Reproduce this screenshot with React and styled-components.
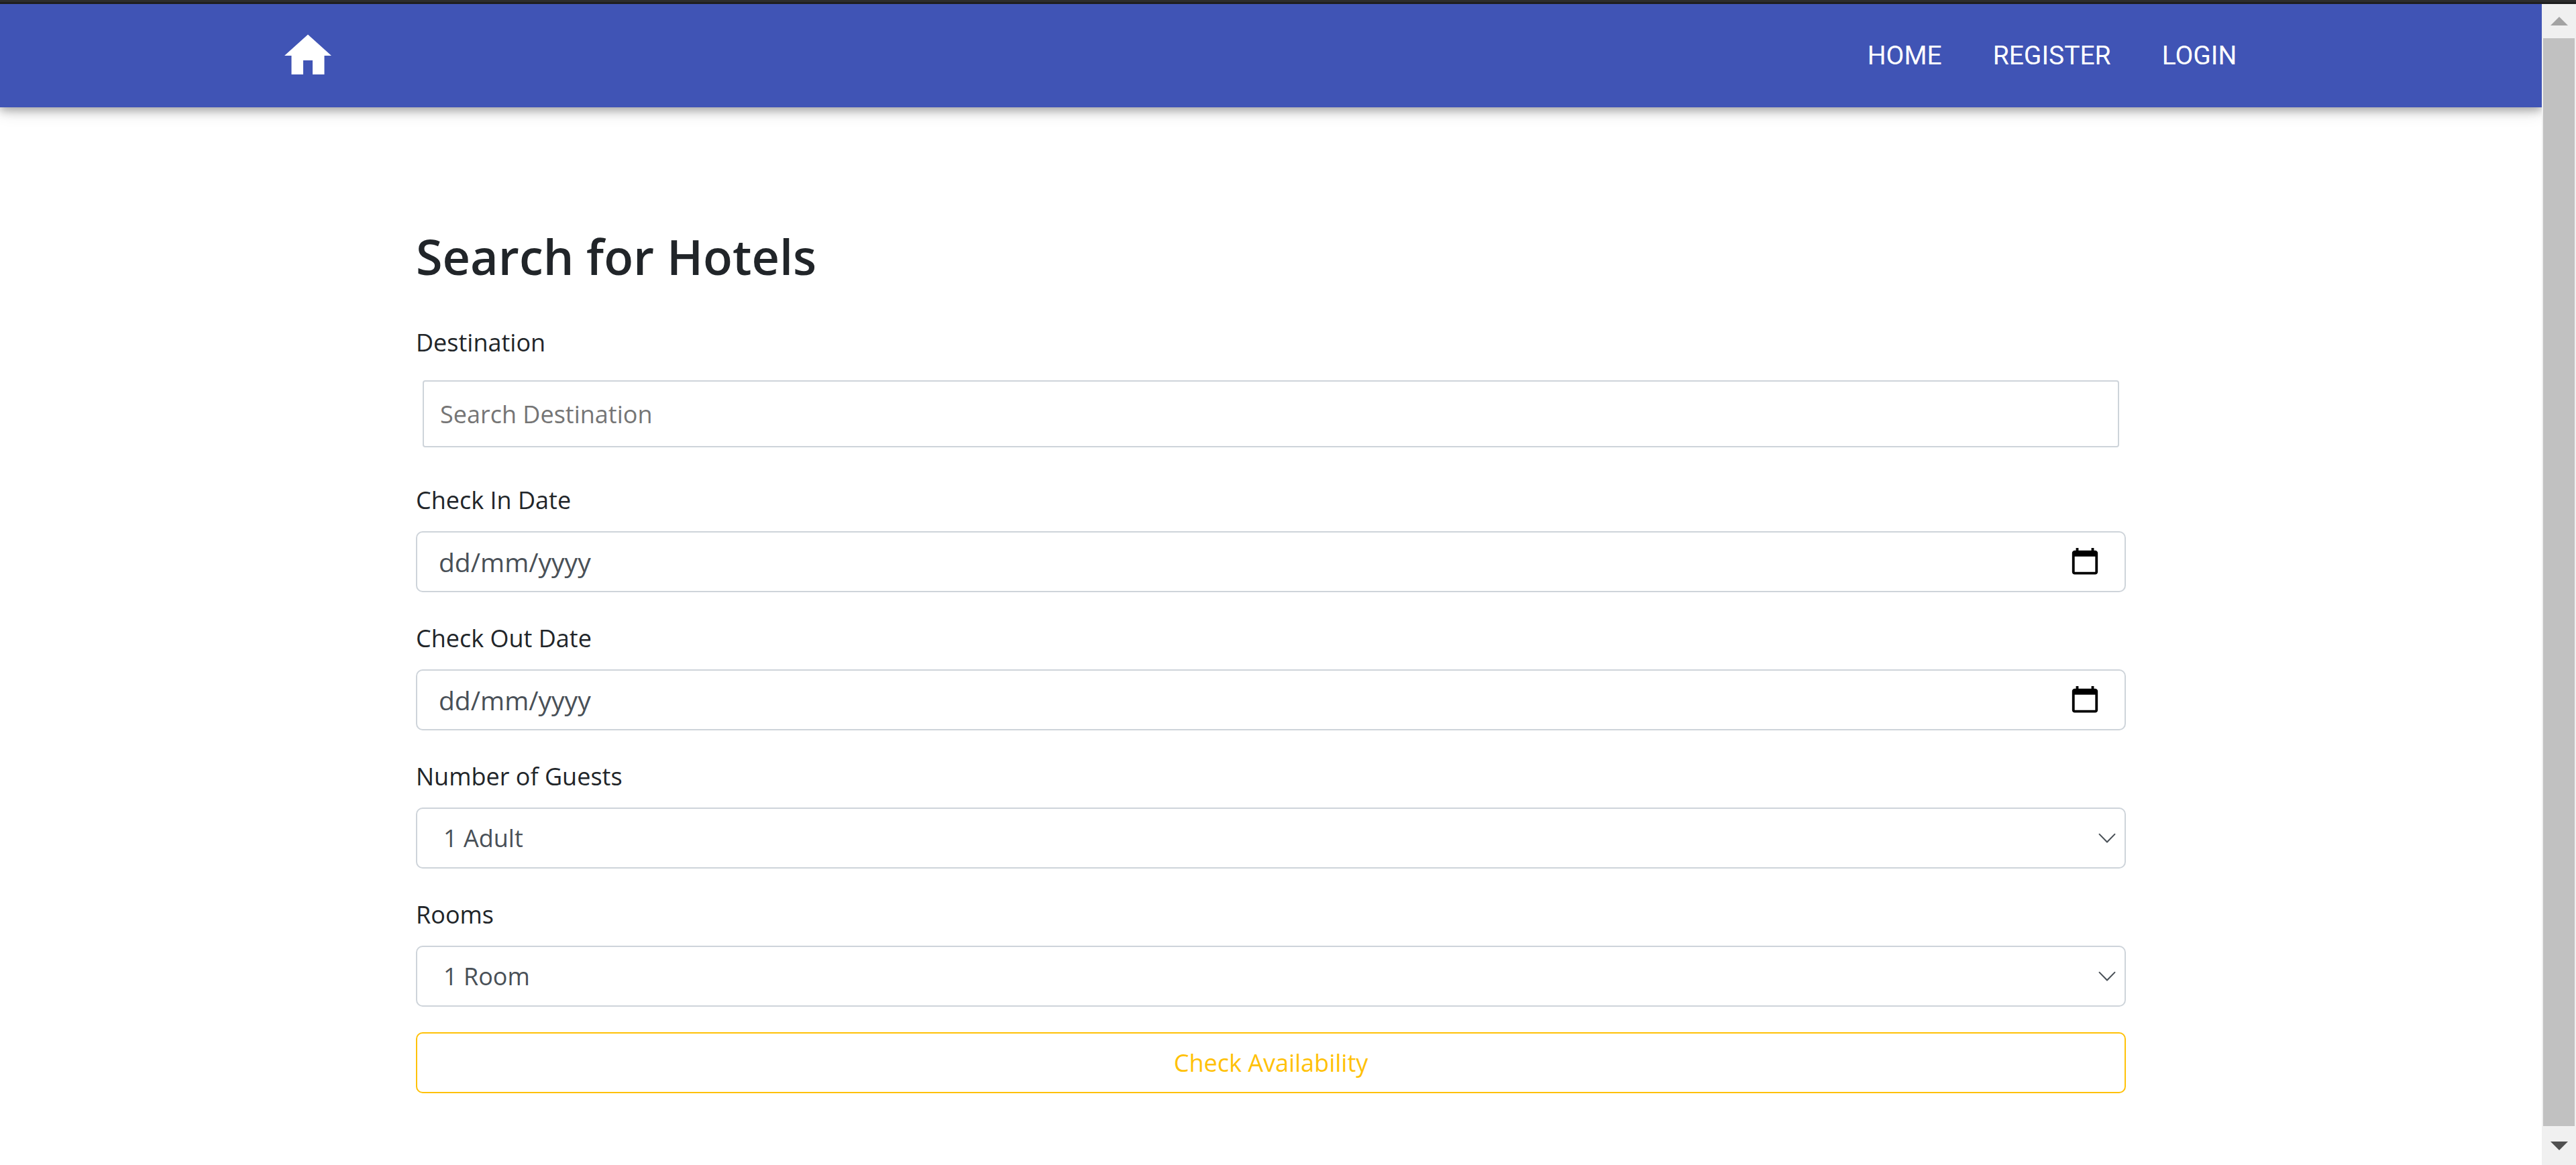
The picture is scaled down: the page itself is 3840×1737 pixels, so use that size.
import React from "react";
import styled, { createGlobalStyle } from "styled-components";

const GlobalStyle = createGlobalStyle`
  *, *::before, *::after { box-sizing: border-box; }
  body {
    margin: 0;
    background: #fff;
    color: #212529;
    font-family: "Segoe UI", "Open Sans", "Noto Sans", sans-serif;
    font-size: 36px;
    line-height: 62px;
  }
  input, select, button { font: inherit; }
`;

const Screen = styled.div`
  display: flex;
  flex-direction: column;
  height: 100vh;
`;

const WindowEdge = styled.div`
  flex: none;
  height: 6px;
  background: #1f1f1f;
  border-top: 3px solid #2d2d2d;
`;

const Viewport = styled.div`
  flex: 1;
  min-height: 0;
  display: flex;
`;

const Page = styled.div`
  flex: 1;
  min-width: 0;
  overflow: hidden;
`;

const NavBar = styled.header`
  display: flex;
  align-items: center;
  justify-content: space-between;
  height: 154px;
  padding: 0 11%;
  background: #4054b5;
  box-shadow: 0 5px 12px rgba(0, 0, 0, 0.26), 0 5px 24px rgba(0, 0, 0, 0.16);
`;

const Brand = styled.a`
  display: flex;
  color: #fff;

  svg {
    width: 84px;
    height: 84px;
    fill: currentColor;
  }
`;

const NavLinks = styled.nav`
  display: flex;
`;

const NavLink = styled.a`
  padding: 0 38px;
  color: #fff;
  font-family: Roboto, sans-serif;
  font-size: 39px;
  text-decoration: none;
`;

const Content = styled.main`
  width: 100%;
  max-width: 2549px;
  margin: 0 auto;
  padding-top: 168px;
`;

const Title = styled.h1`
  margin: 0 0 44px;
  font-size: 72px;
  font-weight: 600;
  line-height: 108px;
`;

const Form = styled.form`
  display: flex;
  flex-direction: column;
`;

const Field = styled.div`
  display: flex;
  flex-direction: column;
  margin-bottom: 38px;
`;

const Label = styled.label`
  margin-bottom: 15px;
`;

const Control = styled.div`
  display: flex;
  align-items: center;
  height: ${(p) => (p.$inset ? "100px" : "91px")};
  margin: ${(p) => (p.$inset ? "10px" : "0")};
  padding-right: ${(p) => (p.$inset ? "24px" : "36px")};
  border: 2px solid #ced4da;
  border-radius: ${(p) => (p.$inset ? "4px" : "10px")};
`;

const TextInput = styled.input`
  flex: 1;
  min-width: 0;
  height: 100%;
  padding: 0 0 0 24px;
  border: 0;
  outline: 0;
  background: none;
  color: #495057;

  &::placeholder {
    color: #757575;
    opacity: 1;
  }
`;

const DateInput = styled(TextInput)`
  padding-left: 32px;
  font-size: 39px;

  &::placeholder {
    color: #495057;
  }
`;

const PickerButton = styled.button`
  display: flex;
  padding: 0;
  border: 0;
  background: none;

  svg {
    width: 46px;
    height: 46px;
  }
`;

const SelectBox = styled.div`
  display: grid;
  align-items: center;
  height: 91px;

  > * { grid-area: 1 / 1; }

  svg {
    justify-self: end;
    width: 28px;
    height: 28px;
    margin-right: 14px;
    pointer-events: none;
  }
`;

const Select = styled.select`
  appearance: none;
  width: 100%;
  height: 100%;
  padding: 0 60px 0 39px;
  border: 2px solid #ced4da;
  border-radius: 10px;
  background: #fff;
  color: #495057;
`;

const SubmitButton = styled.button`
  height: 91px;
  padding: 0 24px;
  border: 2px solid #ffc107;
  border-radius: 10px;
  background: #fff;
  color: #ffc107;
`;

const ScrollBar = styled.div`
  flex: none;
  display: flex;
  flex-direction: column;
  width: 51px;
  padding: 0 2px;
  background: #f0f0f0;
`;

const ScrollArrow = styled.div`
  display: flex;
  align-items: center;
  justify-content: center;
  height: ${(p) => (p.$down ? "58px" : "51px")};

  &::before {
    content: "";
    border: 13px solid transparent;
    border-width: ${(p) => (p.$down ? "13px 13px 0" : "0 13px 13px")};
    border-top-color: ${(p) => (p.$down ? "#505050" : "transparent")};
    border-bottom-color: ${(p) => (p.$down ? "transparent" : "#a3a3a3")};
  }
`;

const ScrollThumb = styled.div`
  flex: 1;
  background: #c1c1c1;
`;

function DateField({ id, label }) {
  return (
    <Field>
      <Label htmlFor={id}>{label}</Label>
      <Control>
        <DateInput id={id} type="text" inputMode="numeric" placeholder="dd/mm/yyyy" />
        <PickerButton type="button" aria-label={`Choose ${label}`}>
          <svg viewBox="0 0 24 24">
            <path d="M20 3h-1V1h-2v2H7V1H5v2H4c-1.100 0-2 .9-2 2v14.700c0 1.100.9 2 2 2h16c1.100 0 2-.9 2-2V5c0-1.100-.9-2-2-2zm0 16.700H4V7.700h16v12z" />
          </svg>
        </PickerButton>
      </Control>
    </Field>
  );
}

function SelectField({ id, label, options }) {
  return (
    <Field>
      <Label htmlFor={id}>{label}</Label>
      <SelectBox>
        <Select id={id}>
          {options.map((o) => (
            <option key={o}>{o}</option>
          ))}
        </Select>
        <svg viewBox="0 0 16 16" fill="none" stroke="#495057" strokeWidth="1.2" strokeLinecap="round" strokeLinejoin="round">
          <path d="M1.5 4.500 8 11.200l6.500-6.700" />
        </svg>
      </SelectBox>
    </Field>
  );
}

export default function App() {
  return (
    <Screen>
      <GlobalStyle />
      <WindowEdge />
      <Viewport>
        <Page>
          <NavBar>
            <Brand href="#home" aria-label="Home">
              <svg viewBox="0 0 24 24">
                <path d="M10 20v-6h4v6h5v-8h3L12 3 2 12h3v8z" />
              </svg>
            </Brand>
            <NavLinks>
              <NavLink href="#home">HOME</NavLink>
              <NavLink href="#register">REGISTER</NavLink>
              <NavLink href="#login">LOGIN</NavLink>
            </NavLinks>
          </NavBar>
          <Content>
            <Title>Search for Hotels</Title>
            <Form>
              <Field>
                <Label htmlFor="destination">Destination</Label>
                <Control $inset>
                  <TextInput id="destination" type="text" placeholder="Search Destination" />
                </Control>
              </Field>
              <DateField id="check-in" label="Check In Date" />
              <DateField id="check-out" label="Check Out Date" />
              <SelectField id="guests" label="Number of Guests" options={["1 Adult", "2 Adults", "3 Adults", "4 Adults"]} />
              <SelectField id="rooms" label="Rooms" options={["1 Room", "2 Rooms", "3 Rooms", "4 Rooms"]} />
              <SubmitButton type="submit">Check Availability</SubmitButton>
            </Form>
          </Content>
        </Page>
        <ScrollBar>
          <ScrollArrow />
          <ScrollThumb />
          <ScrollArrow $down />
        </ScrollBar>
      </Viewport>
    </Screen>
  );
}
